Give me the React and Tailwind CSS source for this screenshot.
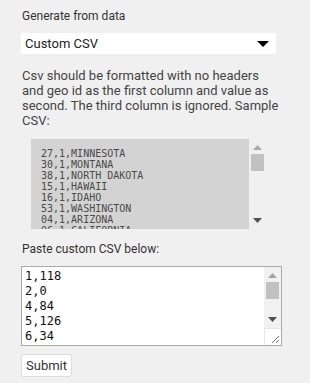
import React from 'react';

const sampleRows = [
  '27,1,MINNESOTA',
  '30,1,MONTANA',
  '38,1,NORTH DAKOTA',
  '15,1,HAWAII',
  '16,1,IDAHO',
  '53,1,WASHINGTON',
  '04,1,ARIZONA',
  '06,1,CALIFORNIA',
  '08,1,COLORADO',
  '32,1,NEVADA',
];

const customRows = ['1,118', '2,0', '4,84', '5,126', '6,34', '8,91'];

function Scrollbar({ up, thumbTop, thumbHeight, className }) {
  return (
    <div className={'flex flex-col items-center ' + className}>
      <svg width="9" height="5" viewBox="0 0 9 5" className="mt-[6px] shrink-0">
        <path d="M0 5 L4.5 0 L9 5 Z" fill={up} />
      </svg>
      <div
        className="w-[13px] bg-[#c1c1c1] shrink-0"
        style={{ marginTop: thumbTop, height: thumbHeight }}
      />
      <div className="flex-1" />
      <svg width="9" height="5" viewBox="0 0 9 5" className="mb-[6px] shrink-0">
        <path d="M0 0 L9 0 L4.5 5 Z" fill="#505050" />
      </svg>
    </div>
  );
}

export default function App() {
  return (
    <div className="w-[310px] h-[383px] overflow-hidden bg-[#f0f0f0] px-[21px] pt-[8px] font-['Roboto',sans-serif] text-[#333]">
      <p className="text-[12px] leading-[16px] pl-[1px]">Generate from data</p>

      <div className="mt-[9px] h-[21px] w-[255px] bg-white flex items-center justify-between pl-[4px] pr-[7px]">
        <span className="text-[13px] text-[#222]">Custom CSV</span>
        <svg width="12" height="6" viewBox="0 0 12 6">
          <path d="M0 0 L12 0 L6 6 Z" fill="#000" />
        </svg>
      </div>

      <p className="mt-[14px] pl-[1px] text-[13px] leading-[15px] text-[#444] w-[260px]">
        Csv should be formatted with no headers and geo id as the first column and value as second. The third column is ignored. Sample CSV:
      </p>

      <div className="mt-[11px] ml-[10px] w-[234px] h-[90px] flex">
        <div className="flex-1 bg-[#d3d3d3] overflow-hidden pt-[9px] pl-[10px]">
          <pre className="font-['DejaVu_Sans_Mono',monospace] text-[10px] leading-[11px] text-[#4a4a4a]">
            {sampleRows.join('\n')}
          </pre>
        </div>
        <Scrollbar up="#a8a8a8" thumbTop={4} thumbHeight={17} className="w-[16px]" />
      </div>

      <p className="mt-[12px] pl-[1px] text-[12px] leading-[16px]">Paste custom CSV below:</p>

      <div className="mt-[9px] w-[261px] h-[80px] bg-white border border-[#a9a9a9] flex">
        <div className="flex-1 overflow-hidden pl-[3px] pt-[2px]">
          <pre className="font-['DejaVu_Sans_Mono',monospace] text-[12px] leading-[15px] text-[#111]">
            {customRows.join('\n')}
          </pre>
        </div>
        <div className="w-[17px] flex flex-col bg-[#f1f1f1]">
          <Scrollbar up="#a3a3a3" thumbTop={4} thumbHeight={17} className="flex-1" />
          <div className="h-[17px] bg-white border-t border-l border-[#e6e6e6] flex items-end justify-end p-[2px]">
            <svg width="8" height="8" viewBox="0 0 8 8">
              <path d="M1 8 L8 1 M5 8 L8 5" stroke="#777" strokeWidth="1" />
            </svg>
          </div>
        </div>
      </div>

      <button className="mt-[8px] h-[23px] px-[4px] bg-white border border-[#dcdcdc] rounded-[3px] text-[13px] text-[#333]">
        Submit
      </button>
    </div>
  );
}
